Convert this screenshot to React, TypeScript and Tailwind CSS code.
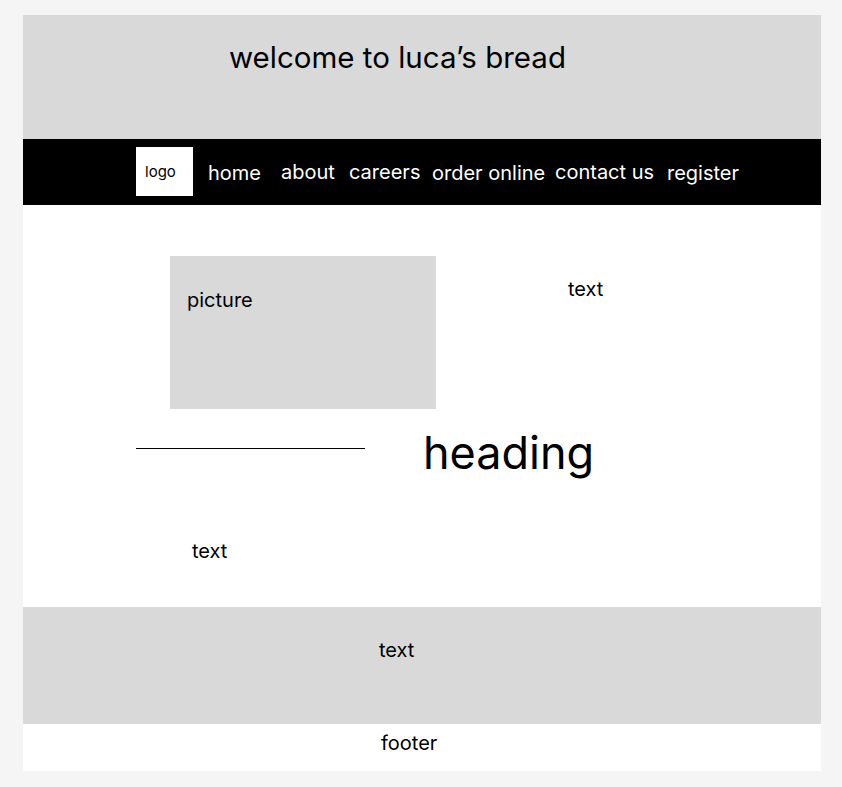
export default function App() {
  const font = { fontFamily: "Inter, 'Liberation Sans', sans-serif" };
  return (
    <div className="min-h-screen bg-[#f5f5f5] pt-[15px] pb-[16px]" style={font}>
      <div className="ml-[23px] w-[798px] flex flex-col text-black">
        {/* header */}
        <div className="h-[124px] bg-[#d9d9d9] pl-[206px] pt-[24px]">
          <h1 className="text-[29.5px] leading-[36px] font-normal">welcome to luca’s bread</h1>
        </div>
        {/* nav */}
        <nav className="h-[66px] bg-black flex items-start pl-[113px] text-white">
          <div className="mt-[8px] w-[57px] h-[49px] bg-white text-black flex items-center pl-[9px] text-[15px] leading-[18px] mr-[15px]">
            logo
          </div>
          <div className="flex items-center h-full text-[20px] leading-[24px]">
            <span className="w-[73px] mt-[1px]">home</span>
            <span className="w-[68px] mt-[-1px]">about</span>
            <span className="w-[83px] mt-[-1px]">careers</span>
            <span className="w-[123px] mt-[1px]">order online</span>
            <span className="w-[112px] mt-[-1px]">contact us</span>
            <span className="mt-[1px]">register</span>
          </div>
        </nav>
        {/* content */}
        <div className="h-[402px] bg-white flex flex-col">
          <div className="flex items-start pt-[51px] pl-[147px]">
            <div className="w-[266px] h-[153px] bg-[#d9d9d9] pl-[17px] pt-[32px] text-[20px] leading-[24px]">
              picture
            </div>
            <div className="ml-[132px] mt-[21px] text-[20px] leading-[24px]">text</div>
          </div>
          <div className="flex items-start mt-[16px] pl-[113px]">
            <div className="w-[229px] h-px bg-black mt-[23px]" />
            <h2 className="ml-[58px] text-[45px] leading-[56px] font-normal">heading</h2>
          </div>
          <div className="mt-[58px] pl-[169px] text-[20px] leading-[24px]">text</div>
        </div>
        {/* band */}
        <div className="h-[117px] bg-[#d9d9d9] pl-[356px] pt-[31px] text-[20px] leading-[24px]">text</div>
        {/* footer */}
        <footer className="h-[47px] bg-white pl-[358px] pt-[7px] text-[20px] leading-[24px]">footer</footer>
      </div>
    </div>
  );
}
